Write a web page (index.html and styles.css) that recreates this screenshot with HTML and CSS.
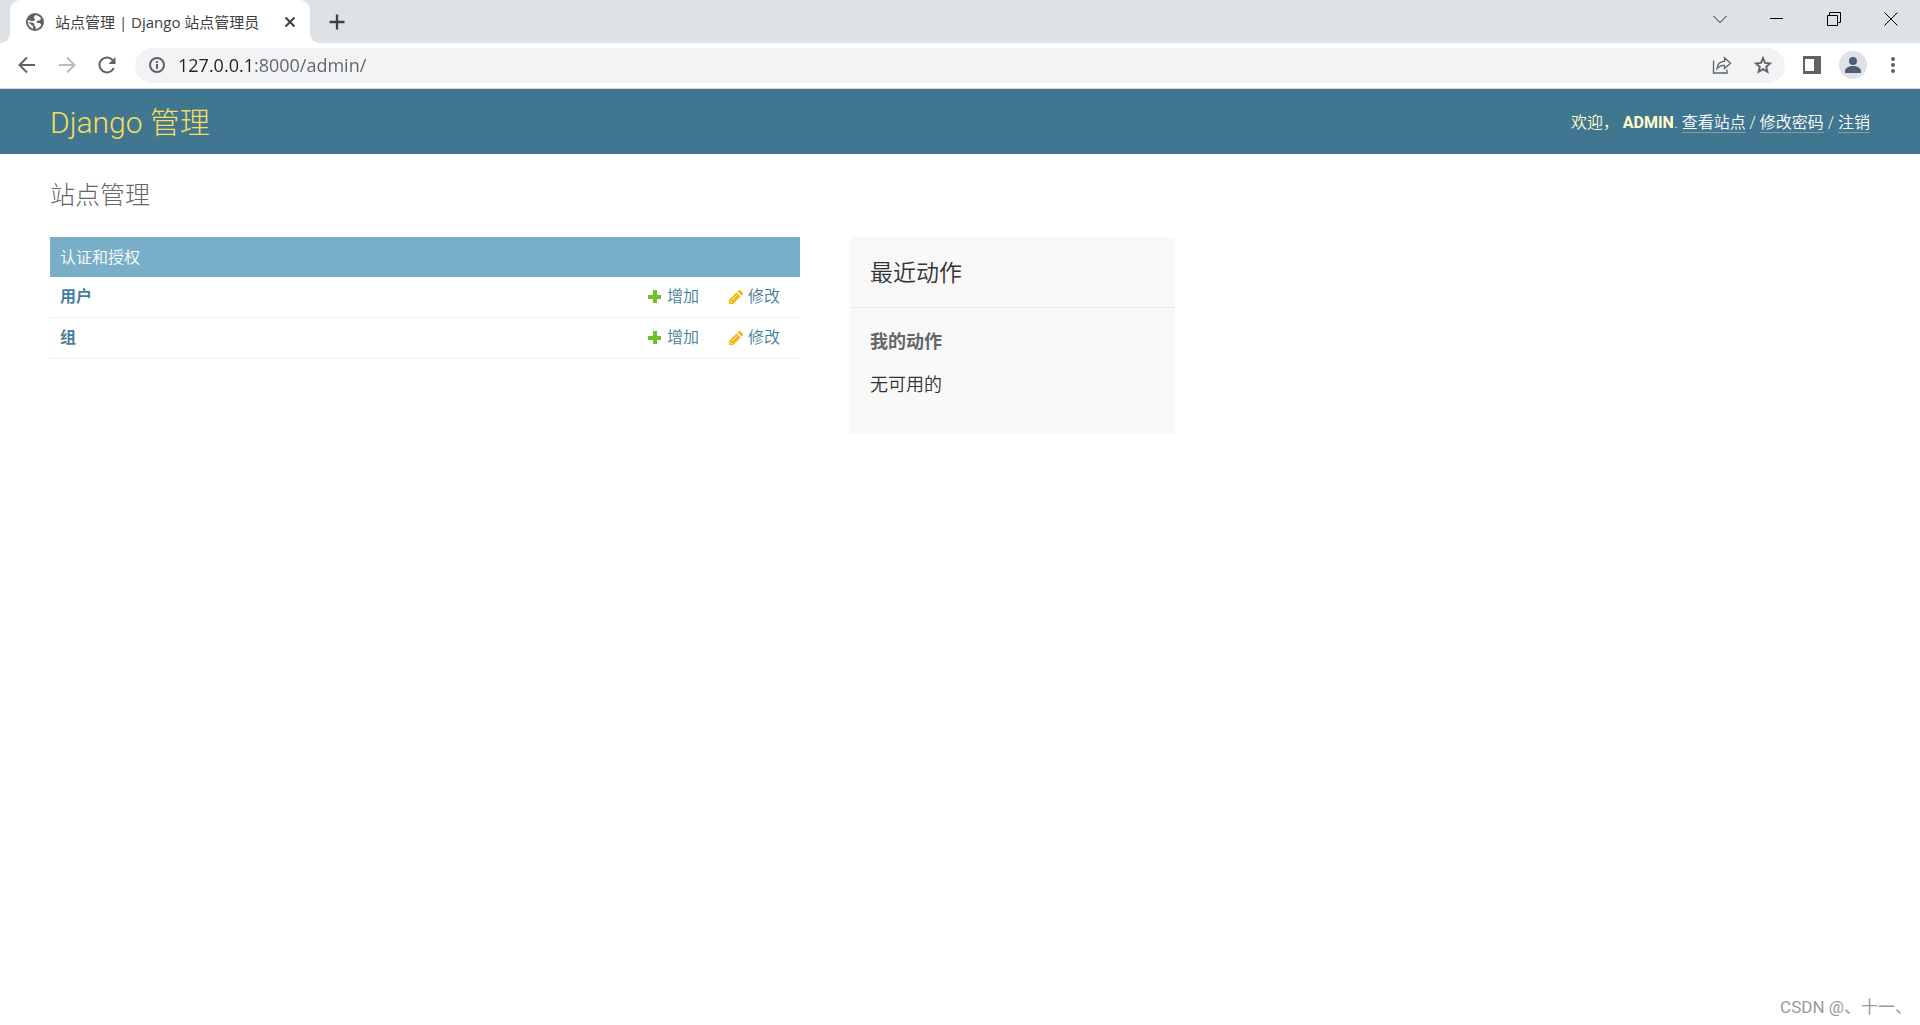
FILE: index.html
```html
<!DOCTYPE html>
<html lang="zh-Hans">
<head>
<meta charset="utf-8">
<meta name="viewport" content="width=device-width, initial-scale=1">
<title>站点管理 | Django 站点管理员</title>
<link rel="stylesheet" href="styles.css">
</head>
<body>
<div class="browser">
  <div class="tab-strip">
    <div class="tab">
      <svg class="favicon" viewBox="0 0 18 18" aria-hidden="true"><circle cx="9" cy="9" r="9" fill="#5f6368"/><path fill="#fff" d="M9.500 2c2.500.2 4.500 1.700 5.500 3.700l-1.200 1.500-2.300.6-1 1.300.8 1h2.300l1.700 1.500c-.8 2.500-2.700 4-5.500 4.400v-2l-1.500-1.500.2-1.700L6.500 9.700 2 8.800C2 12.200 4 15 7.200 15.900L6.800 13 4 10.800 2 8.500l.2-1.400 4 1.100 2-.6L9.300 6 7.500 4.800z"/></svg>
      <span class="tab-title">站点管理 | Django 站点管理员</span>
      <button class="icon-button tab-close" aria-label="关闭标签页"><svg width="12" height="12" viewBox="0 0 12 12"><path d="M1.500 1.500l9 9m0-9l-9 9" stroke="#3c4043" stroke-width="2" fill="none"/></svg></button>
    </div>
    <button class="icon-button new-tab" aria-label="新标签页"><svg width="16" height="16" viewBox="0 0 16 16"><path d="M8 .5v15M.5 8h15" stroke="#3c4043" stroke-width="2.300" fill="none"/></svg></button>
    <div class="window-controls">
      <button class="icon-button" aria-label="搜索标签页"><svg width="14" height="14" viewBox="0 0 14 14"><path d="M.5 4L7 10.500 13.500 4" stroke="#222" fill="none"/></svg></button>
      <button class="icon-button" aria-label="最小化"><svg width="13" height="14" viewBox="0 0 13 14"><path d="M0 6.500h13" stroke="#000" fill="none"/></svg></button>
      <button class="icon-button" aria-label="还原"><svg width="14" height="14" viewBox="0 0 14 14"><path d="M.5 3.500h10v10H.5zM2.500 3V.5h11v10H11" stroke="#000" fill="none"/></svg></button>
      <button class="icon-button" aria-label="关闭"><svg width="14" height="14" viewBox="0 0 14 14"><path d="M.5 .5l13 13m0-13l-13 13" stroke="#000" fill="none"/></svg></button>
    </div>
  </div>
  <div class="toolbar">
    <div class="nav-buttons">
      <button class="icon-button" aria-label="后退"><svg width="18" height="18" viewBox="0 0 18 18"><path d="M17 9H2M9 1.500L1.500 9 9 16.500" stroke="#5f6368" stroke-width="2" fill="none"/></svg></button>
      <button class="icon-button" aria-label="前进" disabled><svg width="18" height="18" viewBox="0 0 18 18"><path d="M1 9h15M9 1.500L16.500 9 9 16.500" stroke="#babcbe" stroke-width="2" fill="none"/></svg></button>
      <button class="icon-button" aria-label="重新加载"><svg width="18" height="18" viewBox="0 0 18 18"><path d="M15.800 12A7.500 7.500 0 1 1 15 4.500" stroke="#5f6368" stroke-width="2" fill="none"/><path d="M17.500 1v7H10.500z" fill="#5f6368"/></svg></button>
    </div>
    <div class="address-bar">
      <svg width="16" height="16" viewBox="0 0 16 16" aria-hidden="true"><circle cx="8" cy="8" r="7" fill="none" stroke="#5f6368" stroke-width="2"/><path d="M8 7v5M8 4v2" stroke="#5f6368" stroke-width="2"/></svg>
      <input class="url" type="text" value="127.0.0.1:8000/admin/" aria-label="地址和搜索栏">
      <button class="icon-button" aria-label="分享"><svg width="20" height="18" viewBox="0 0 20 18"><path d="M1.500 4.500v12.500h13.500v-3.500M5 12.500c.5-5 3-7 7.500-7.200V1.700L18.500 7.200l-6 5.300V9.300C9 9.300 7 10 5 12.500z" stroke="#5f6368" stroke-width="1.300" fill="none"/></svg></button>
      <button class="icon-button" aria-label="添加书签"><svg width="18" height="18" viewBox="0 0 18 18"><path d="M9 2.200l2 4.700 5.100.5-3.900 3.400 1.200 5L9 13.200l-4.400 2.600 1.200-5L1.900 7.400 7 6.900z" stroke="#5f6368" stroke-width="1.900" fill="none"/></svg></button>
    </div>
    <div class="actions">
      <button class="icon-button" aria-label="侧边栏"><svg width="18" height="18" viewBox="0 0 18 18"><path d="M0 0h18v18H0zM2 3v12h9V3z" fill="#5f6368" fill-rule="evenodd"/></svg></button>
      <button class="icon-button" aria-label="个人资料"><svg width="28" height="28" viewBox="0 0 28 28"><circle cx="14" cy="14" r="14" fill="#dee1e6"/><circle cx="14" cy="10" r="4" fill="#4f5d75"/><path d="M6 22v-2c0-3 4-5 8-5s8 2 8 5v2z" fill="#4f5d75"/></svg></button>
      <button class="icon-button" aria-label="菜单"><svg width="4" height="18" viewBox="0 0 4 18"><g fill="#5f6368"><circle cx="2" cy="3" r="2"/><circle cx="2" cy="9" r="2"/><circle cx="2" cy="15" r="2"/></g></svg></button>
    </div>
  </div>
</div>

<header class="site-header">
  <a class="brand" href="#">Django 管理</a>
  <nav class="user-tools">欢迎， <strong>ADMIN</strong>. <a href="#">查看站点</a> / <a href="#">修改密码</a> / <a href="#">注销</a></nav>
</header>

<main class="content">
  <h1>站点管理</h1>
  <div class="dashboard">
    <table class="module">
      <caption><a href="#">认证和授权</a></caption>
      <tbody>
        <tr>
          <th scope="row"><a href="#">用户</a></th>
          <td><a class="row-link" href="#"><svg width="14" height="14" viewBox="0 0 14 14" aria-hidden="true"><path d="M5 0h4v5h4v4H9v4H5V9H0V5h5z" fill="#70bf2b"/></svg>增加</a></td>
          <td><a class="row-link" href="#"><svg width="14" height="14" viewBox="0 0 14 14" aria-hidden="true"><path d="M0 14v-4l7.500-7.500 4 4L4 14zM8.500 1.500l1-1q1-1 2 0l2 2q1 1 0 2l-1 1z" fill="#efb80b"/><path d="M1 11l2 2M3 10l5-5" stroke="#fff3c4" fill="none"/></svg>修改</a></td>
        </tr>
        <tr>
          <th scope="row"><a href="#">组</a></th>
          <td><a class="row-link" href="#"><svg width="14" height="14" viewBox="0 0 14 14" aria-hidden="true"><path d="M5 0h4v5h4v4H9v4H5V9H0V5h5z" fill="#70bf2b"/></svg>增加</a></td>
          <td><a class="row-link" href="#"><svg width="14" height="14" viewBox="0 0 14 14" aria-hidden="true"><path d="M0 14v-4l7.500-7.500 4 4L4 14zM8.500 1.500l1-1q1-1 2 0l2 2q1 1 0 2l-1 1z" fill="#efb80b"/><path d="M1 11l2 2M3 10l5-5" stroke="#fff3c4" fill="none"/></svg>修改</a></td>
        </tr>
      </tbody>
    </table>
    <aside class="recent">
      <h2>最近动作</h2>
      <div class="recent-body">
        <h3>我的动作</h3>
        <p>无可用的</p>
      </div>
    </aside>
  </div>
</main>
<footer class="watermark">CSDN @、十一、</footer>
</body>
</html>
```
FILE: styles.css
```css
* { box-sizing: border-box; }

body {
  display: flex;
  flex-direction: column;
  min-height: 100vh;
  margin: 0;
  background: #fff;
  color: #333;
  font: 16px/20px Roboto, "Noto Sans CJK SC", sans-serif;
}

a { color: #447e9b; text-decoration: none; }
h1, h2, h3, p { margin: 0; }
svg { display: block; flex: none; }

.icon-button {
  display: flex;
  align-items: center;
  justify-content: center;
  padding: 0;
  border: 0;
  background: none;
}

/* Browser frame */
.browser {
  border-bottom: 1px solid #d5d7da;
  font-family: "Open Sans", "Noto Sans CJK SC", sans-serif;
}

.tab-strip {
  display: flex;
  height: 43px;
  padding-left: 10px;
  background: #dee1e6;
}

.tab {
  position: relative;
  display: flex;
  align-items: center;
  width: 300px;
  padding: 0 14px 0 16px;
  border-radius: 10px 10px 0 0;
  background: #fff;
}

.tab::before,
.tab::after {
  content: "";
  position: absolute;
  bottom: 0;
  width: 10px;
  height: 10px;
}

.tab::before { right: 100%; background: radial-gradient(circle at 0 0, #dee1e6 10px, #fff 10px); }
.tab::after { left: 100%; background: radial-gradient(circle at 100% 0, #dee1e6 10px, #fff 10px); }

.favicon { width: 18px; height: 18px; }

.tab-title {
  flex: 1;
  margin-left: 11px;
  color: #3c4043;
  font-size: 15px;
  white-space: nowrap;
}

.new-tab { width: 54px; }

.window-controls {
  display: flex;
  height: 37px;
  margin-left: auto;
  padding-right: 1px;
}

.window-controls .icon-button { width: 57px; }

.toolbar {
  display: flex;
  align-items: center;
  height: 45px;
  padding: 0 25px 1px 18px;
}

.nav-buttons { display: flex; gap: 22px; }

.address-bar {
  display: flex;
  flex: 1;
  align-items: center;
  height: 35px;
  margin: 0 18px 0 19px;
  padding: 0 13px 0 14px;
  border-radius: 18px;
  background: #f1f3f4;
}

.address-bar .icon-button { margin-left: 22px; }

/* The host part of the address is darker than the rest */
.url {
  flex: 1;
  min-width: 0;
  margin: 0 0 0 13px;
  padding: 0;
  border: 0;
  outline: 0;
  background: linear-gradient(to right, #202124 76px, #5f6368 76px);
  -webkit-background-clip: text;
  background-clip: text;
  color: transparent;
  caret-color: #202124;
  font-family: inherit;
  font-size: 18px;
}

.actions { display: flex; align-items: center; gap: 18px; }
.actions .icon-button:last-child { margin-left: 6px; }

/* Admin header */
.site-header {
  display: flex;
  align-items: center;
  justify-content: space-between;
  padding: 16px 50px 14px;
  background: #417690;
}

.brand {
  color: #f5dd5d;
  font-size: 30px;
  font-weight: 300;
  line-height: 35px;
}

.user-tools {
  color: #ffc;
  font-size: 16px;
  font-weight: 350;
}

.user-tools strong { font-weight: 700; }

.user-tools a {
  border-bottom: 1px solid #7a9fb1;
  color: #fff;
}

/* Dashboard */
.content { flex: 1; padding: 25px 50px; }

h1 {
  margin-bottom: 25px;
  color: #666;
  font-size: 25px;
  font-weight: 300;
  line-height: 33px;
}

.dashboard {
  display: flex;
  align-items: flex-start;
  gap: 50px;
  max-width: 1125px;
}

.module {
  flex: 1;
  border-collapse: collapse;
}

.module caption {
  padding: 11px 10px 9px;
  background: #79aec8;
  font-size: 16px;
  font-weight: 350;
  text-align: left;
}

.module caption a { color: #fff; }

.module th,
.module td {
  padding: 10px;
  border-bottom: 1px solid #eee;
  text-align: left;
  line-height: 20px;
}

.module th { width: 100%; }
.module td { padding-right: 20px; font-weight: 350; white-space: nowrap; }

.row-link { display: flex; align-items: center; gap: 5px; }

.recent {
  flex: 0 0 325px;
  background: #f8f8f8;
}

.recent h2 {
  padding: 22px 20px 18px;
  border-bottom: 1px solid #eaeaea;
  font-size: 23px;
  font-weight: 350;
  line-height: 30px;
}

.recent-body { padding: 20px 20px 35px; }

.recent h3 {
  margin-bottom: 15px;
  color: #666;
  font-size: 18px;
  line-height: 28px;
}

.recent p { font-size: 18px; font-weight: 350; line-height: 28px; }

.watermark {
  padding: 0 8px 8px;
  color: #999;
  font-size: 17px;
  text-align: right;
}
```
